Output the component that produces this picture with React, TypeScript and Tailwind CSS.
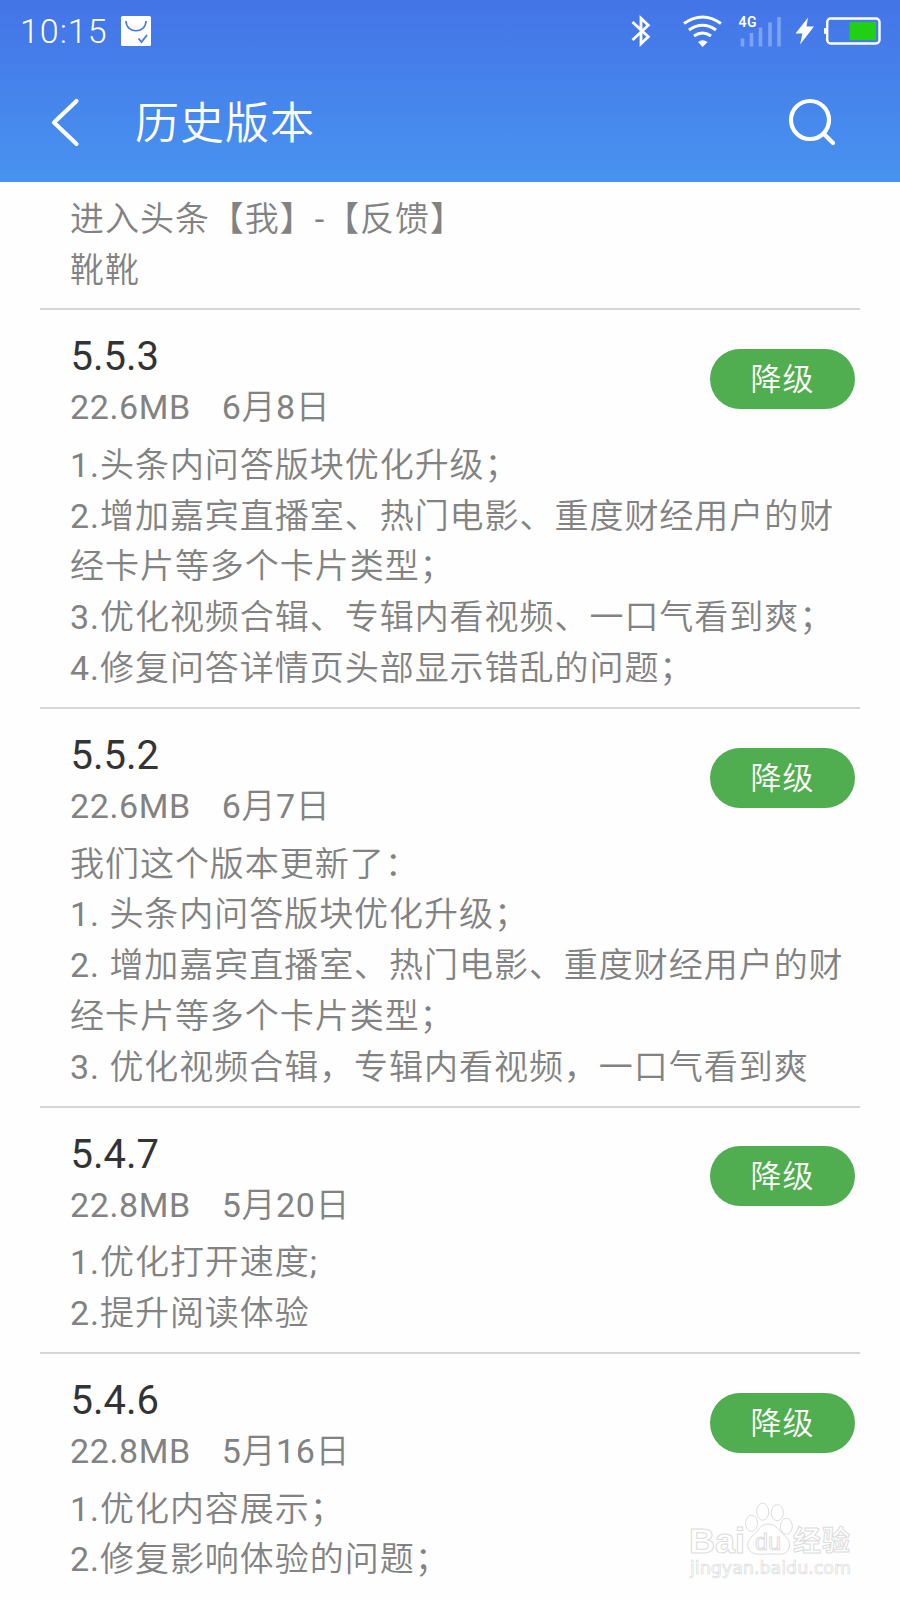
import React from 'react'

type Version = {
  name: string
  size: string
  date: string
  lines: string[]
}

const versions: Version[] = [
  {
    name: '5.5.3',
    size: '22.6MB',
    date: '6月8日',
    lines: [
      '1.头条内问答版块优化升级；',
      '2.增加嘉宾直播室、热门电影、重度财经用户的财',
      '经卡片等多个卡片类型；',
      '3.优化视频合辑、专辑内看视频、一口气看到爽；',
      '4.修复问答详情页头部显示错乱的问题；',
    ],
  },
  {
    name: '5.5.2',
    size: '22.6MB',
    date: '6月7日',
    lines: [
      '我们这个版本更新了：',
      '1. 头条内问答版块优化升级；',
      '2. 增加嘉宾直播室、热门电影、重度财经用户的财',
      '经卡片等多个卡片类型；',
      '3. 优化视频合辑，专辑内看视频，一口气看到爽',
    ],
  },
  {
    name: '5.4.7',
    size: '22.8MB',
    date: '5月20日',
    lines: ['1.优化打开速度;', '2.提升阅读体验'],
  },
  {
    name: '5.4.6',
    size: '22.8MB',
    date: '5月16日',
    lines: ['1.优化内容展示；', '2.修复影响体验的问题；'],
  },
]

const StatusBar = () => (
  <div className="flex h-[62px] items-center justify-between pl-5 pr-[18px]">
    <div className="flex items-center">
      <span className="w-[101px] whitespace-nowrap text-[34px] leading-[62px] tracking-[1px]">10:15</span>
      <svg width="30" height="30" viewBox="0 0 30 30">
        <rect width="30" height="30" rx="1.5" fill="#fff" />
        <path d="M5 5c0 13 20 13 20 0" fill="none" stroke="#4678e4" strokeWidth="1.6" />
        <path d="M17.500 22.500l3 3.500 5.500-7" fill="none" stroke="#4678e4" strokeWidth="1.8" />
      </svg>
    </div>
    <svg width="254" height="40" viewBox="628 11 254 40" fill="none">
      {/* bluetooth */}
      <path d="M632.500 22l15.800 14.700-7.300 7V18.300l7.300 7L632.500 40" stroke="#fff" strokeWidth="2.8" />
      {/* wifi */}
      <path d="M684 23.500q18.500-13 37 0M689 30q13.500-9.500 27 0M694 36q8.500-6 17 0" stroke="#fff" strokeWidth="3" />
      <path d="M698 42q4.500-3.500 9.500 0l-4.800 5z" fill="#fff" />
      {/* signal */}
      <text x="738.500" y="27.300" fill="#fff" fontSize="14" fontWeight="600" textLength="18" fontFamily="Roboto, sans-serif">4G</text>
      <path d="M742.500 38.500v8M751.500 33v13.500M760.500 27.500v19M770 22.500v24M779 17v29.500" stroke="#7ea2f3" strokeWidth="3.6" />
      {/* charging */}
      <path d="M808 17.500l-12.500 16h7l-2.500 11 14-18h-7.500z" fill="#fff" />
      {/* battery */}
      <rect x="827.200" y="18.500" width="52.300" height="25" rx="3.500" stroke="#fff" strokeWidth="2.400" />
      <rect x="824" y="28" width="2.500" height="6" rx="1" fill="#fff" />
      <rect x="849.500" y="22" width="26.500" height="18" fill="#1fd015" />
    </svg>
  </div>
)

const Header = () => (
  <header className="h-[182px] bg-linear-to-b from-[#4474e7] to-[#4893f0] font-[350] text-white">
    <StatusBar />
    <div className="flex h-[120px] items-center pl-[50px] pr-[62px]">
      <svg width="30" height="50" viewBox="50 97 30 50" fill="none" stroke="#fff" strokeWidth="4.200" strokeLinecap="round" strokeLinejoin="round">
        <path d="M76.500 101L54 122.500 76.500 144" />
      </svg>
      <h1 className="ml-[55px] mt-[3px] flex-1 text-[44px] leading-[60px] tracking-[1px]">历史版本</h1>
      <svg width="50" height="50" viewBox="788 97 50 50" fill="none" stroke="#fff" strokeWidth="4.200" strokeLinecap="round">
        <circle cx="810" cy="120" r="19" />
        <path d="M824 134l9 9" />
      </svg>
    </div>
  </header>
)

const Notes = ({ lines }: { lines: string[] }) => (
  <div>
    {lines.map((line) => (
      <p key={line} className="h-[50.8px] whitespace-nowrap leading-[50.8px]">{line}</p>
    ))}
  </div>
)

const VersionItem = ({ version }: { version: Version }) => (
  <section className="border-t-2 border-[#d6d6d6] pb-[13.4px] pl-[30px] pr-[5px] pt-[22px]">
    <div className="flex items-start justify-between">
      <div>
        <h2 className="h-[50px] pl-[0.5px] text-[40px] leading-[50px] tracking-normal text-[#333]">{version.name}</h2>
        <div className="flex h-[50px] gap-[31px] leading-[50px] tracking-[0.6px]">
          <span>{version.size}</span>
          <span>{version.date}</span>
        </div>
      </div>
      <button className="mt-[16.4px] h-[60px] w-[145px] rounded-full bg-[#50ae50] pt-[2px] text-[31px] font-[350] leading-[58px] tracking-[1px] text-white">
        降级
      </button>
    </div>
    <div className="mt-[7.4px]">
      <Notes lines={version.lines} />
    </div>
  </section>
)

const Watermark = () => (
  <svg className="absolute left-[684px] top-[1498px]" width="176" height="90" viewBox="684 1498 176 90" fill="#fff" stroke="#dcdcdc" strokeWidth="1">
    <text x="689" y="1553" fontSize="35" fontWeight="700" textLength="56" lengthAdjust="spacingAndGlyphs" fontFamily="Liberation Sans, sans-serif">Bai</text>
    <ellipse cx="751.500" cy="1523.300" rx="6" ry="8" />
    <ellipse cx="762.700" cy="1511.700" rx="6" ry="8.500" />
    <ellipse cx="777.300" cy="1512.700" rx="6" ry="8" />
    <ellipse cx="786.300" cy="1526.300" rx="6" ry="8" />
    <path d="M768.500 1524c-8 0-9 5.500-13.500 9.500-5 4-8 8.500-7 13.500 2 8 10 7.500 20.500 7s17 2 20-5c3-6-1-11-6-15.500-5-4-6-9.500-14-9.500z" />
    <text x="755" y="1549.500" fontSize="24" fontWeight="400" textLength="26" lengthAdjust="spacingAndGlyphs" fontFamily="Liberation Sans, sans-serif">du</text>
    <text x="793" y="1550.500" fontSize="28" fontWeight="700" textLength="57" fontFamily="Noto Sans CJK SC, sans-serif">经验</text>
    <text x="690" y="1574" fontSize="18" strokeWidth="0.700" textLength="161" lengthAdjust="spacingAndGlyphs" fontFamily="DejaVu Sans, sans-serif">jingyan.baidu.com</text>
  </svg>
)

const App = () => {
  return (
    <div className="relative h-[1600px] w-[900px] overflow-hidden bg-[#fefefe] font-[Roboto,'Noto_Sans_CJK_SC_DemiLight','Noto_Sans_CJK_SC',sans-serif]">
      <Header />
      <main className="px-10 text-[34px] tracking-[0.96px] text-[#828282]">
        <div className="pb-[12.8px] pl-[30px] pt-[12px]">
          <Notes lines={['进入头条【我】-【反馈】', '靴靴']} />
        </div>
        {versions.map((version) => (
          <VersionItem key={version.name} version={version} />
        ))}
      </main>
      <Watermark />
    </div>
  )
}

export default App
